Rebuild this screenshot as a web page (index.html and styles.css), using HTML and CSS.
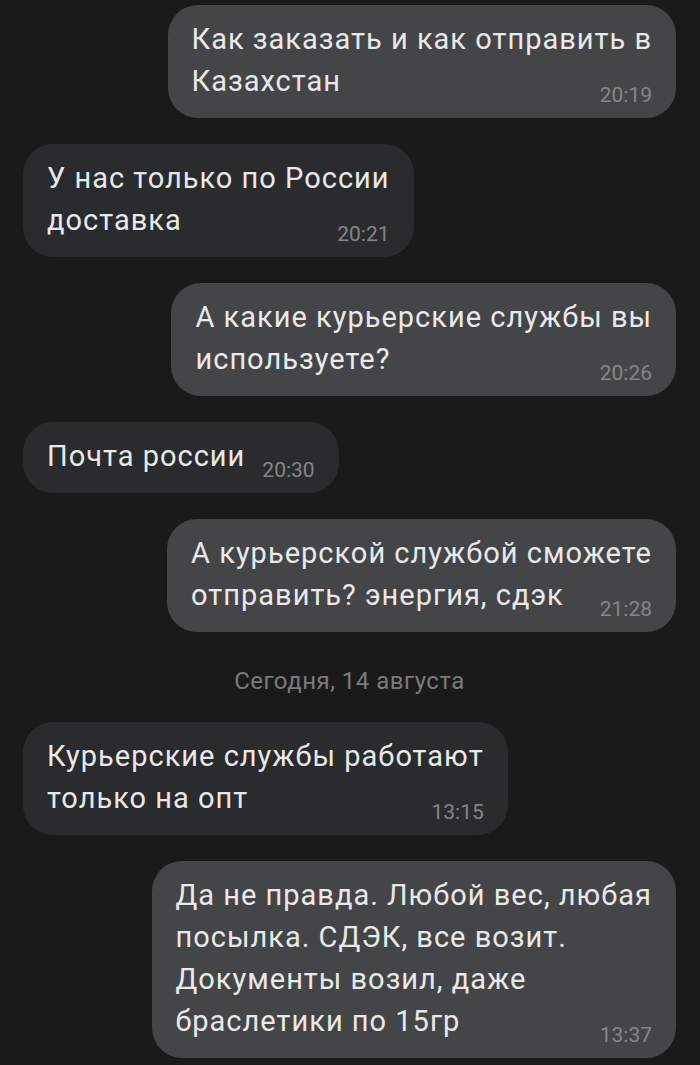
FILE: index.html
```html
<!DOCTYPE html>
<html lang="ru">
<head>
<meta charset="utf-8">
<title>Чат</title>
<link rel="stylesheet" href="styles.css">
</head>
<body>
<div class="chat">
  <div class="msg out"><div class="bubble">Как заказать и как отправить в<br>Казахстан<span class="time">20:19</span></div></div>
  <div class="msg in"><div class="bubble">У нас только по России<br>доставка<span class="time">20:21</span></div></div>
  <div class="msg out"><div class="bubble">А какие курьерские службы вы<br>используете?<span class="time">20:26</span></div></div>
  <div class="msg in"><div class="bubble">Почта россии<span class="time">20:30</span></div></div>
  <div class="msg out"><div class="bubble">А курьерской службой сможете<br>отправить? энергия, сдэк<span class="time">21:28</span></div></div>
  <div class="date">Сегодня, 14 августа</div>
  <div class="msg in"><div class="bubble">Курьерские службы работают<br>только на опт<span class="time">13:15</span></div></div>
  <div class="msg out"><div class="bubble">Да не правда. Любой вес, любая<br>посылка. СДЭК, все возит.<br>Документы возил, даже<br>браслетики по 15гр<span class="time">13:37</span></div></div>
</div>
</body>
</html>
```
FILE: styles.css
```css
html, body {
  margin: 0;
  padding: 0;
  background: #1a1a1b;
}
body {
  width: 700px;
  height: 1065px;
  overflow: hidden;
  font-family: Roboto, "Noto Sans", sans-serif;
}
.chat {
  display: flex;
  flex-direction: column;
  gap: 26px;
  padding: 5px 24px 0 23px;
}
.msg {
  display: flex;
}
.msg.out {
  justify-content: flex-end;
}
.msg.in {
  justify-content: flex-start;
}
.bubble {
  display: flow-root;
  white-space: nowrap;
  border-radius: 30px;
  padding: 13px 24px 16px 24px;
  font-size: 29px;
  line-height: 42px;
  letter-spacing: 1px;
  color: #e9e9ea;
}
.out .bubble {
  background: #444547;
}
.in .bubble {
  background: #2a2b2d;
}
.time {
  float: right;
  margin: 25px 0 -5px 17px;
  font-size: 21px;
  line-height: 21px;
  letter-spacing: 0;
  color: #858587;
}
.date {
  text-align: center;
  font-size: 24px;
  line-height: 30px;
  padding-top: 8px;
  letter-spacing: 0.5px;
  color: #7a7a7b;
}
```
